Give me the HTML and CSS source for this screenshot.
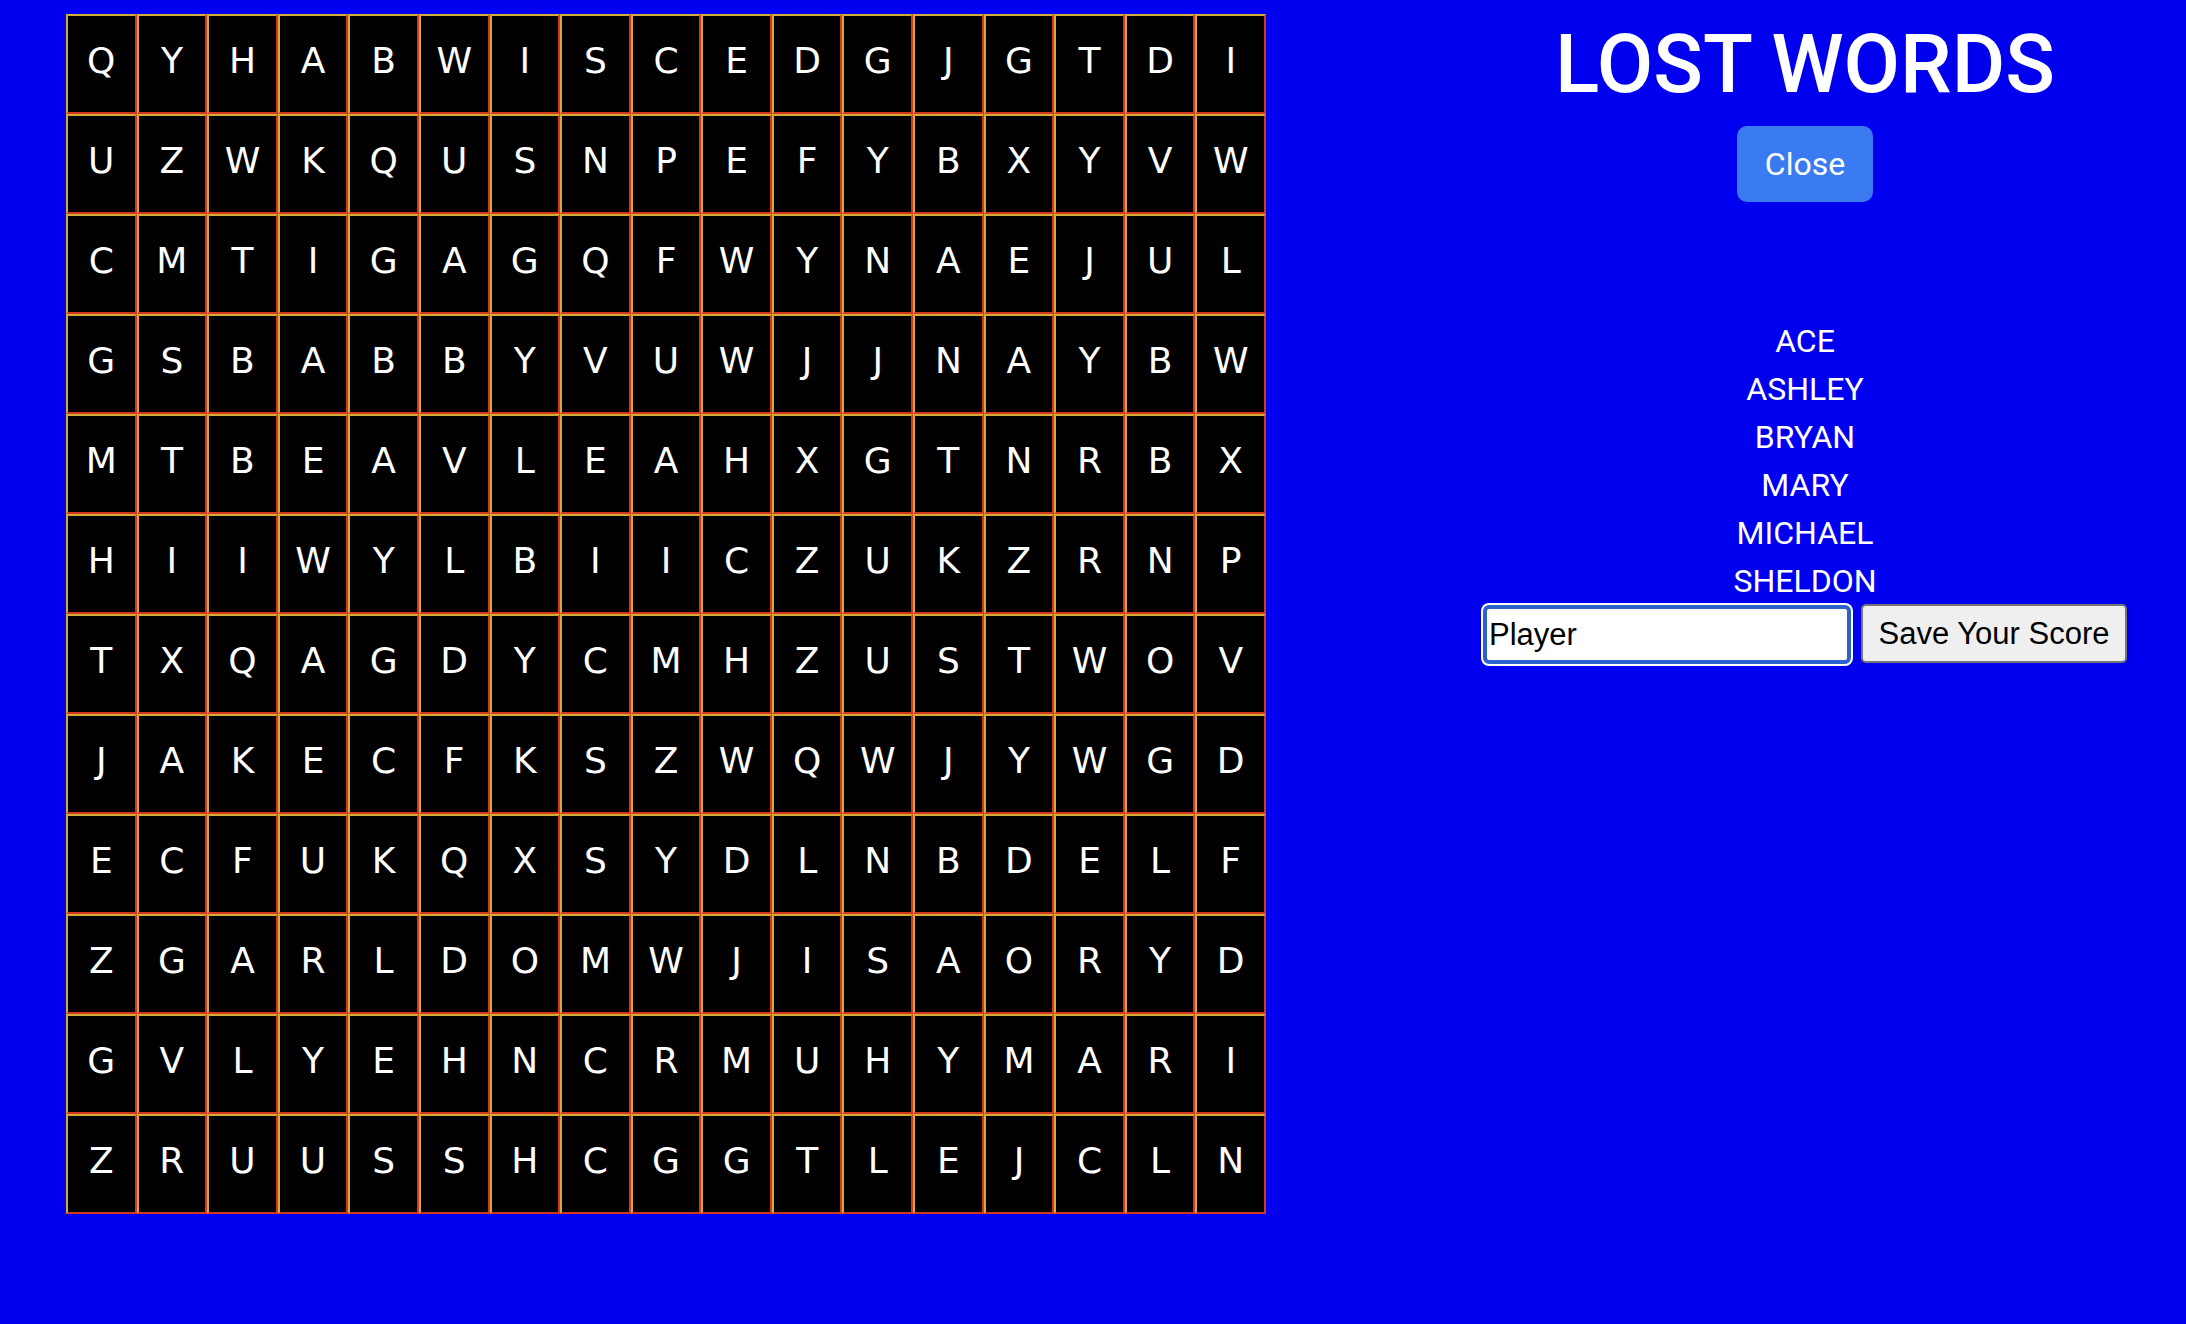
FILE: index.html
```html
<!DOCTYPE html>
<html lang="en">
<head>
<meta charset="utf-8">
<title>Lost Words</title>
<link rel="stylesheet" href="styles.css">
</head>
<body>
<div class="page">
  <div class="board" id="board">
    <div class="cell">Q</div><div class="cell">Y</div><div class="cell">H</div><div class="cell">A</div><div class="cell">B</div><div class="cell">W</div><div class="cell">I</div><div class="cell">S</div><div class="cell">C</div><div class="cell">E</div><div class="cell">D</div><div class="cell">G</div><div class="cell">J</div><div class="cell">G</div><div class="cell">T</div><div class="cell">D</div><div class="cell">I</div>
    <div class="cell">U</div><div class="cell">Z</div><div class="cell">W</div><div class="cell">K</div><div class="cell">Q</div><div class="cell">U</div><div class="cell">S</div><div class="cell">N</div><div class="cell">P</div><div class="cell">E</div><div class="cell">F</div><div class="cell">Y</div><div class="cell">B</div><div class="cell">X</div><div class="cell">Y</div><div class="cell">V</div><div class="cell">W</div>
    <div class="cell">C</div><div class="cell">M</div><div class="cell">T</div><div class="cell">I</div><div class="cell">G</div><div class="cell">A</div><div class="cell">G</div><div class="cell">Q</div><div class="cell">F</div><div class="cell">W</div><div class="cell">Y</div><div class="cell">N</div><div class="cell">A</div><div class="cell">E</div><div class="cell">J</div><div class="cell">U</div><div class="cell">L</div>
    <div class="cell">G</div><div class="cell">S</div><div class="cell">B</div><div class="cell">A</div><div class="cell">B</div><div class="cell">B</div><div class="cell">Y</div><div class="cell">V</div><div class="cell">U</div><div class="cell">W</div><div class="cell">J</div><div class="cell">J</div><div class="cell">N</div><div class="cell">A</div><div class="cell">Y</div><div class="cell">B</div><div class="cell">W</div>
    <div class="cell">M</div><div class="cell">T</div><div class="cell">B</div><div class="cell">E</div><div class="cell">A</div><div class="cell">V</div><div class="cell">L</div><div class="cell">E</div><div class="cell">A</div><div class="cell">H</div><div class="cell">X</div><div class="cell">G</div><div class="cell">T</div><div class="cell">N</div><div class="cell">R</div><div class="cell">B</div><div class="cell">X</div>
    <div class="cell">H</div><div class="cell">I</div><div class="cell">I</div><div class="cell">W</div><div class="cell">Y</div><div class="cell">L</div><div class="cell">B</div><div class="cell">I</div><div class="cell">I</div><div class="cell">C</div><div class="cell">Z</div><div class="cell">U</div><div class="cell">K</div><div class="cell">Z</div><div class="cell">R</div><div class="cell">N</div><div class="cell">P</div>
    <div class="cell">T</div><div class="cell">X</div><div class="cell">Q</div><div class="cell">A</div><div class="cell">G</div><div class="cell">D</div><div class="cell">Y</div><div class="cell">C</div><div class="cell">M</div><div class="cell">H</div><div class="cell">Z</div><div class="cell">U</div><div class="cell">S</div><div class="cell">T</div><div class="cell">W</div><div class="cell">O</div><div class="cell">V</div>
    <div class="cell">J</div><div class="cell">A</div><div class="cell">K</div><div class="cell">E</div><div class="cell">C</div><div class="cell">F</div><div class="cell">K</div><div class="cell">S</div><div class="cell">Z</div><div class="cell">W</div><div class="cell">Q</div><div class="cell">W</div><div class="cell">J</div><div class="cell">Y</div><div class="cell">W</div><div class="cell">G</div><div class="cell">D</div>
    <div class="cell">E</div><div class="cell">C</div><div class="cell">F</div><div class="cell">U</div><div class="cell">K</div><div class="cell">Q</div><div class="cell">X</div><div class="cell">S</div><div class="cell">Y</div><div class="cell">D</div><div class="cell">L</div><div class="cell">N</div><div class="cell">B</div><div class="cell">D</div><div class="cell">E</div><div class="cell">L</div><div class="cell">F</div>
    <div class="cell">Z</div><div class="cell">G</div><div class="cell">A</div><div class="cell">R</div><div class="cell">L</div><div class="cell">D</div><div class="cell">O</div><div class="cell">M</div><div class="cell">W</div><div class="cell">J</div><div class="cell">I</div><div class="cell">S</div><div class="cell">A</div><div class="cell">O</div><div class="cell">R</div><div class="cell">Y</div><div class="cell">D</div>
    <div class="cell">G</div><div class="cell">V</div><div class="cell">L</div><div class="cell">Y</div><div class="cell">E</div><div class="cell">H</div><div class="cell">N</div><div class="cell">C</div><div class="cell">R</div><div class="cell">M</div><div class="cell">U</div><div class="cell">H</div><div class="cell">Y</div><div class="cell">M</div><div class="cell">A</div><div class="cell">R</div><div class="cell">I</div>
    <div class="cell">Z</div><div class="cell">R</div><div class="cell">U</div><div class="cell">U</div><div class="cell">S</div><div class="cell">S</div><div class="cell">H</div><div class="cell">C</div><div class="cell">G</div><div class="cell">G</div><div class="cell">T</div><div class="cell">L</div><div class="cell">E</div><div class="cell">J</div><div class="cell">C</div><div class="cell">L</div><div class="cell">N</div>
  </div>
  <div class="panel">
    <h1 class="title">LOST WORDS</h1>
    <button class="btn-close" type="button">Close</button>
    <ul class="words">
      <li>ACE</li>
      <li>ASHLEY</li>
      <li>BRYAN</li>
      <li>MARY</li>
      <li>MICHAEL</li>
      <li>SHELDON</li>
    </ul>
    <form class="score-form">
      <input class="player-input" type="text" value="Player">
      <button class="save-btn" type="button">Save Your Score</button>
    </form>
  </div>
</div>
</body>
</html>
```

FILE: styles.css
```css
html, body {
  margin: 0;
  padding: 0;
  background: #0000ee;
}

body {
  width: 2186px;
  height: 1324px;
  overflow: hidden;
  font-family: Roboto, "Liberation Sans", sans-serif;
}

.page {
  display: flex;
  align-items: flex-start;
  padding-top: 14px;
  padding-left: 66px;
}

.board {
  display: grid;
  grid-template-columns: repeat(17, 1fr);
  grid-template-rows: repeat(12, 100px);
  width: 1200px;
  flex: none;
  background: #000;
}

.cell {
  box-sizing: border-box;
  display: flex;
  align-items: center;
  justify-content: center;
  padding-bottom: 7px;
  background: #000;
  color: #fff;
  font-family: "DejaVu Sans", Verdana, sans-serif;
  font-size: 36px;
  border-top: 2px solid #d2ac38;
  border-left: 2px solid #d2ac38;
  border-right: 2px solid #d6361c;
  border-bottom: 2px solid #d6361c;
}

.panel {
  flex: 1;
  margin-left: 158px;
  display: flex;
  flex-direction: column;
  align-items: center;
  color: #fff;
}

.title {
  margin: 2px 0 0 0;
  font-family: Roboto, "Liberation Sans", sans-serif;
  font-weight: 500;
  font-size: 82px;
  line-height: 96px;
  color: #fff;
}

.btn-close {
  margin: 14px 0 0 0;
  height: 76px;
  padding: 12px 26px;
  border: 2px solid #3a7bf2;
  border-radius: 10px;
  background: #3a7bf2;
  color: #fff;
  font-family: Roboto, "Liberation Sans", sans-serif;
  font-size: 32px;
  line-height: 48px;
}

.words {
  list-style: none;
  margin: 115px 0 0 0;
  padding: 0;
  text-align: center;
  font-family: Roboto, "Liberation Sans", sans-serif;
  font-size: 32px;
  line-height: 48px;
  color: #fff;
}

.score-form {
  display: flex;
  align-items: flex-start;
  gap: 10px;
  margin: -1px 0 0 0;
}

.player-input {
  box-sizing: border-box;
  width: 368px;
  height: 59px;
  margin-top: 1px;
  padding: 0 0 0 2px;
  border: 4px solid #2d62cc;
  border-radius: 6px;
  box-shadow: 0 0 0 2px #fff;
  background: #fff;
  color: #000;
  font-family: "Liberation Sans", Arial, sans-serif;
  font-size: 31px;
  outline: none;
}

.save-btn {
  box-sizing: border-box;
  width: 266px;
  height: 59px;
  padding: 0;
  border: 2px solid #767676;
  border-radius: 5px;
  background: #efefef;
  color: #000;
  font-family: "Liberation Sans", Arial, sans-serif;
  font-size: 31px;
  text-align: center;
}
```
